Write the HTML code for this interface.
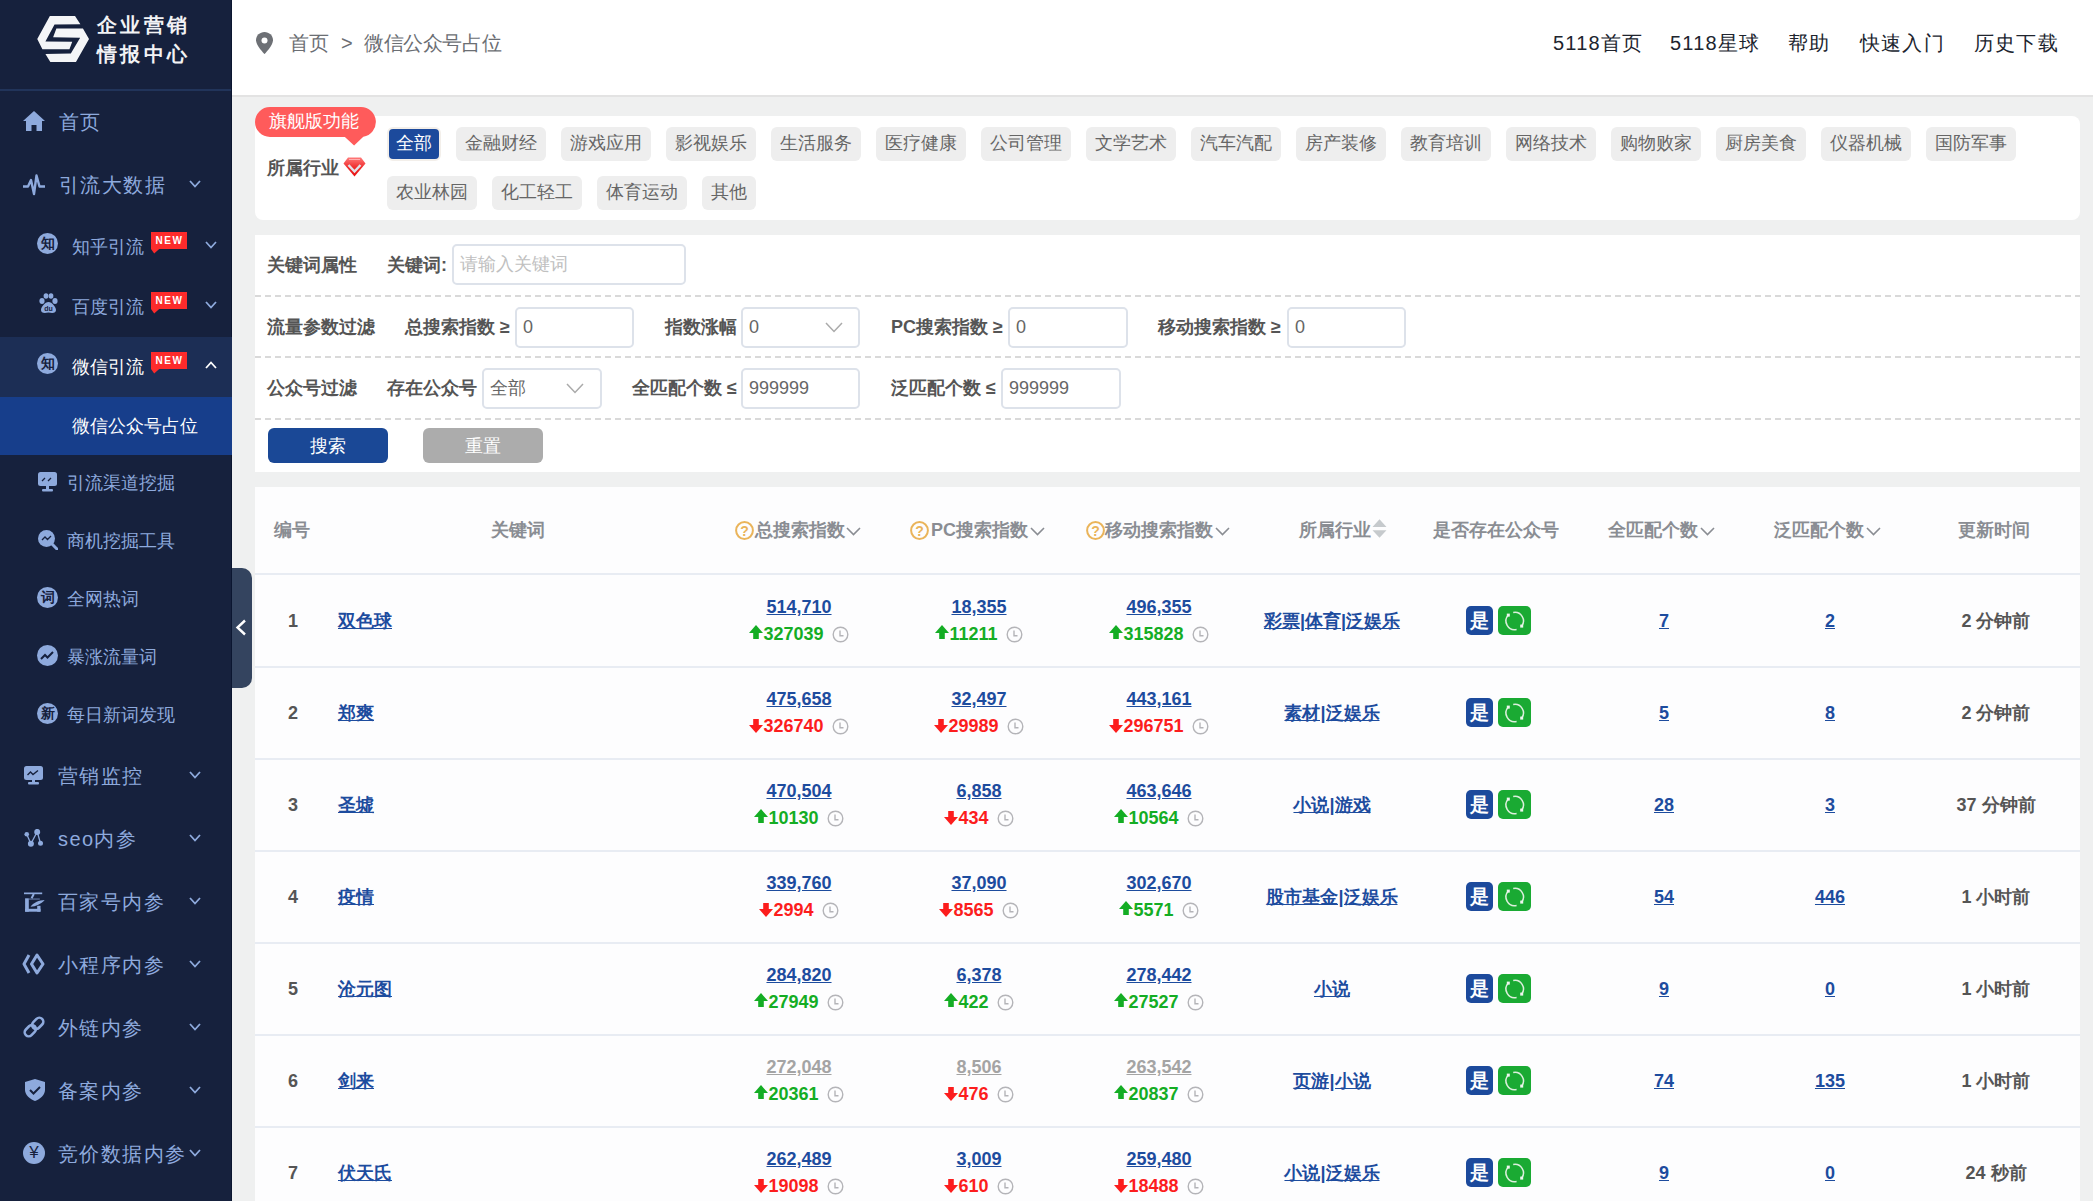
<!DOCTYPE html><html><head><meta charset="utf-8"><style>
*{box-sizing:border-box;margin:0;padding:0}
html,body{width:2093px;height:1201px;overflow:hidden}
body{position:relative;background:#eff0f0;font-family:"Liberation Sans",sans-serif;color:#333}
.a{position:absolute;white-space:nowrap}
#side{position:absolute;left:0;top:0;width:232px;height:1201px;background:#16213d;overflow:hidden}
#side .edge{position:absolute;left:231px;top:0;width:1px;height:1201px;background:#0b1630}
#side .sep{position:absolute;left:0;top:89px;width:231px;height:2px;background:#21345a}
.t20{position:absolute;font-size:20px;line-height:20px;color:#8eaadd;white-space:nowrap;letter-spacing:1.4px}
.t18{position:absolute;font-size:18px;line-height:18px;color:#8eaadd;white-space:nowrap}
.new{position:absolute;width:36px;height:21px}
#hdr{position:absolute;left:232px;top:0;width:1861px;height:97px;background:#fff;border-bottom:2px solid #e3e3e3}
.card{position:absolute;left:255px;width:1825px;background:#fff}
.tag{position:absolute;height:34px;line-height:32px;font-size:18px;color:#666;background:#eeeeee;border-radius:6px;text-align:center;white-space:nowrap}
.lbl{position:absolute;font-size:18px;line-height:18px;font-weight:bold;color:#555;white-space:nowrap}
.inp{position:absolute;height:41px;border:2px solid #dde2ea;border-radius:5px;background:#fff;font-size:18px;color:#666;line-height:37px;padding-left:6px;white-space:nowrap}
.dash{position:absolute;left:255px;width:1825px;height:2px;background:repeating-linear-gradient(90deg,#d9d9d9 0 6px,transparent 6px 10px)}
.th{position:absolute;font-size:18px;line-height:18px;font-weight:bold;color:#8a8d93;white-space:nowrap}
.rl{position:absolute;left:255px;width:1825px;height:2px;background:#e8ecf3}
.num{position:absolute;font-size:18px;line-height:18px;font-weight:bold;color:#555;white-space:nowrap}
.lnk{position:absolute;font-size:18px;line-height:18px;font-weight:bold;color:#1d4c9e;text-decoration:underline;white-space:nowrap;text-underline-offset:1px}
.val{position:absolute;font-size:18px;line-height:18px;font-weight:bold;color:#1d4c9e;text-decoration:underline;white-space:nowrap;text-align:center;width:160px;text-underline-offset:1px}
.val.g{color:#a4a4a4}
.chg{position:absolute;font-size:18px;line-height:18px;font-weight:bold;white-space:nowrap;width:160px;text-align:center}
.up{color:#14ad24}.dn{color:#fc1d1d}
.chg svg{vertical-align:-2px}
.badge{position:absolute;width:27px;height:29px;background:#1c4a9c;border-radius:5px;color:#fff;font-size:19px;font-weight:bold;line-height:29px;text-align:center}
.rf{position:absolute;width:33px;height:29px;background:#1aaa33;border-radius:5px}
</style></head><body>
<div id="side"><div class="edge"></div>
<svg class="a" style="left:34px;top:12px" width="60" height="56" viewBox="0 0 1287 1201">
<path fill="#f4f5f7" d="M340,85 L880,85 L995,260 L440,270 L245,630 L820,640 L760,800 L180,800 L70,580 Z"/>
<path fill="#f4f5f7" d="M480,355 L1050,355 L1180,580 L900,1075 L350,1075 L245,900 L790,890 L990,550 L410,540 Z"/>
</svg>
<div class="a" style="left:97px;top:15px;color:#f2f3f5;font-size:20px;line-height:20px;font-weight:bold;letter-spacing:3.3px">企业营销</div>
<div class="a" style="left:97px;top:44px;color:#f2f3f5;font-size:20px;line-height:20px;font-weight:bold;letter-spacing:3.3px">情报中心</div>
<div class="sep"></div>
<div class="a" style="left:0;top:337px;width:232px;height:60px;background:#1c2e55"></div>
<div class="a" style="left:0;top:397px;width:232px;height:58px;background:#173e8b"></div>
<svg class="a" style="left:23px;top:110px" width="22" height="22" viewBox="0 0 22 22"><path d="M11,1 L22,11 L19,11 L19,21 L13.5,21 L13.5,15 L8.5,15 L8.5,21 L3,21 L3,11 L0,11 Z" fill="#8eaadd"/></svg>
<div class="t20" style="left:59px;top:112px">首页</div>
<svg class="a" style="left:23px;top:174px" width="22" height="22" viewBox="0 0 22 22"><path d="M0.5,12.5 L5,12.5 L8,6 L11,20 L13.5,1.5 L16.5,12.5 L21.5,12.5" fill="none" stroke="#8eaadd" stroke-width="2.4" stroke-linejoin="round" stroke-linecap="round"/></svg>
<div class="t20" style="left:59px;top:175px">引流大数据</div>
<svg class="a" style="left:189px;top:180px" width="12" height="8" viewBox="0 0 12 8"><path d="M1,1 L6.0,6.5 L11,1" fill="none" stroke="#8eaadd" stroke-width="1.8"/></svg>
<div class="a" style="left:37px;top:233px;width:21px;height:21px;border-radius:50%;background:#8eaadd;color:#16213d;font-size:14px;line-height:21px;text-align:center;font-weight:bold">知</div>
<div class="t18" style="left:72px;top:238px">知乎引流</div>
<svg class="a" style="left:151px;top:232px" width="37" height="22" viewBox="0 0 37 22"><path d="M0,0 H36 V17 H8.2 L3.2,21.5 L0,17 Z" fill="#fd2b2b"/><text x="19.5" y="12.3" text-anchor="middle" font-family="Liberation Sans" font-weight="bold" font-size="10.5" letter-spacing="1.6" fill="#fff" transform="scale(0.95,1)">NEW</text></svg>
<svg class="a" style="left:205px;top:241px" width="12" height="8" viewBox="0 0 12 8"><path d="M1,1 L6.0,6.5 L11,1" fill="none" stroke="#8eaadd" stroke-width="1.7"/></svg>
<svg class="a" style="left:38px;top:293px" width="21" height="21" viewBox="0 0 21 21"><ellipse cx="4" cy="8" rx="2.6" ry="3" fill="#8eaadd"/><ellipse cx="8" cy="3" rx="2.4" ry="2.8" fill="#8eaadd"/><ellipse cx="13" cy="3" rx="2.4" ry="2.8" fill="#8eaadd"/><ellipse cx="17" cy="8" rx="2.6" ry="3" fill="#8eaadd"/><path d="M10.5,9 C7,9 3,14 3,17 C3,20 6,20.5 10.5,19.5 C15,20.5 18,20 18,17 C18,14 14,9 10.5,9 Z" fill="#8eaadd"/><text x="10.5" y="18" text-anchor="middle" font-size="7" font-weight="bold" font-family="Liberation Sans" fill="#16213d">du</text></svg>
<div class="t18" style="left:72px;top:298px">百度引流</div>
<svg class="a" style="left:151px;top:292px" width="37" height="22" viewBox="0 0 37 22"><path d="M0,0 H36 V17 H8.2 L3.2,21.5 L0,17 Z" fill="#fd2b2b"/><text x="19.5" y="12.3" text-anchor="middle" font-family="Liberation Sans" font-weight="bold" font-size="10.5" letter-spacing="1.6" fill="#fff" transform="scale(0.95,1)">NEW</text></svg>
<svg class="a" style="left:205px;top:301px" width="12" height="8" viewBox="0 0 12 8"><path d="M1,1 L6.0,6.5 L11,1" fill="none" stroke="#8eaadd" stroke-width="1.8"/></svg>
<div class="a" style="left:37px;top:353px;width:21px;height:21px;border-radius:50%;background:#8eaadd;color:#16213d;font-size:14px;line-height:21px;text-align:center;font-weight:bold">知</div>
<div class="t18" style="left:72px;top:358px;color:#fff">微信引流</div>
<svg class="a" style="left:151px;top:352px" width="37" height="22" viewBox="0 0 37 22"><path d="M0,0 H36 V17 H8.2 L3.2,21.5 L0,17 Z" fill="#fd2b2b"/><text x="19.5" y="12.3" text-anchor="middle" font-family="Liberation Sans" font-weight="bold" font-size="10.5" letter-spacing="1.6" fill="#fff" transform="scale(0.95,1)">NEW</text></svg>
<svg class="a" style="left:205px;top:361px" width="12" height="8" viewBox="0 0 12 8"><path d="M1,7 L6.0,1.5 L11,7" fill="none" stroke="#fff" stroke-width="1.8"/></svg>
<div class="t18" style="left:72px;top:417px;color:#fff">微信公众号占位</div>
<svg class="a" style="left:38px;top:472px" width="19" height="20" viewBox="0 0 19 20"><rect x="0" y="0" width="19" height="14" rx="2.5" fill="#8eaadd"/><rect x="8" y="13" width="3" height="4" fill="#8eaadd"/><rect x="4" y="17" width="11" height="2.5" rx="1" fill="#8eaadd"/><path d="M4,9 L7,6 M10,9 L13,6" stroke="#16213d" stroke-width="1.3"/></svg>
<div class="t18" style="left:67px;top:474px">引流渠道挖掘</div>
<svg class="a" style="left:38px;top:530px" width="20" height="20" viewBox="0 0 20 20"><circle cx="8.5" cy="8.5" r="8.5" fill="#8eaadd"/><path d="M14,14 L19,19" stroke="#8eaadd" stroke-width="3" stroke-linecap="round"/><path d="M4,10 L7,7 L9.5,9.5 L13,6" fill="none" stroke="#16213d" stroke-width="1.3"/></svg>
<div class="t18" style="left:67px;top:532px">商机挖掘工具</div>
<div class="a" style="left:37px;top:587px;width:21px;height:21px;border-radius:50%;background:#8eaadd;color:#16213d;font-size:14px;line-height:21px;text-align:center;font-weight:bold">词</div>
<div class="t18" style="left:67px;top:590px">全网热词</div>
<svg class="a" style="left:37px;top:645px" width="21" height="21" viewBox="0 0 21 21"><circle cx="10.5" cy="10.5" r="10.5" fill="#8eaadd"/><path d="M4,14 L8,10 L10.5,12.5 L16,7" fill="none" stroke="#16213d" stroke-width="2"/></svg>
<div class="t18" style="left:67px;top:648px">暴涨流量词</div>
<div class="a" style="left:37px;top:703px;width:21px;height:21px;border-radius:50%;background:#8eaadd;color:#16213d;font-size:14px;line-height:21px;text-align:center;font-weight:bold">新</div>
<div class="t18" style="left:67px;top:706px">每日新词发现</div>
<svg class="a" style="left:24px;top:766px" width="19" height="19" viewBox="0 0 19 19"><rect x="0" y="0" width="19" height="14" rx="2.5" fill="#8eaadd"/><rect x="8" y="13" width="3" height="3" fill="#8eaadd"/><rect x="4" y="16" width="11" height="2.5" rx="1" fill="#8eaadd"/><path d="M3.5,9 L6.5,6 L9,8.5 L14,4.5" fill="none" stroke="#16213d" stroke-width="1.4"/></svg>
<div class="t20" style="left:58px;top:766px">营销监控</div>
<svg class="a" style="left:189px;top:771px" width="12" height="8" viewBox="0 0 12 8"><path d="M1,1 L6.0,6.5 L11,1" fill="none" stroke="#8eaadd" stroke-width="1.8"/></svg>
<svg class="a" style="left:24px;top:829px" width="20" height="19" viewBox="0 0 20 19"><path d="M2.75,5.2 L6.9,14.75 L13.2,2.7 L16.5,14.3" fill="none" stroke="#8eaadd" stroke-width="1.3"/><circle cx="2.75" cy="5.2" r="2.3" fill="#8eaadd"/><circle cx="13.2" cy="2.9" r="3" fill="#8eaadd"/><circle cx="6.9" cy="14.75" r="3" fill="#8eaadd"/><circle cx="16.5" cy="14.3" r="2.5" fill="#8eaadd"/></svg>
<div class="t20" style="left:58px;top:829px">seo内参</div>
<svg class="a" style="left:189px;top:834px" width="12" height="8" viewBox="0 0 12 8"><path d="M1,1 L6.0,6.5 L11,1" fill="none" stroke="#8eaadd" stroke-width="1.8"/></svg>
<svg class="a" style="left:24px;top:892px" width="21" height="20" viewBox="0 0 21 20"><rect x="0" y="0.5" width="18.2" height="1.7" fill="#8eaadd"/><path d="M9.8,2 L7.6,6.3" stroke="#8eaadd" stroke-width="2"/><rect x="1.1" y="6.3" width="3.7" height="13.4" fill="#8eaadd"/><rect x="1.1" y="16.8" width="15.4" height="2.9" fill="#8eaadd"/><rect x="13.2" y="13.8" width="3.3" height="5.9" fill="#8eaadd"/><path d="M6.5,14.7 C10,10 15,8.5 20.7,8 C17,12 12,14.5 6.5,14.7 Z" fill="#8eaadd"/><rect x="4.8" y="6.3" width="11" height="1.5" fill="#8eaadd" opacity="0.5"/></svg>
<div class="t20" style="left:58px;top:892px">百家号内参</div>
<svg class="a" style="left:189px;top:897px" width="12" height="8" viewBox="0 0 12 8"><path d="M1,1 L6.0,6.5 L11,1" fill="none" stroke="#8eaadd" stroke-width="1.8"/></svg>
<svg class="a" style="left:22px;top:953px" width="24" height="22" viewBox="0 0 24 22"><path d="M7,2 L2,11 L7,20" fill="none" stroke="#8eaadd" stroke-width="3" stroke-linejoin="round"/><path d="M15,2 L21,11 L15,20 L9.5,11 Z" fill="none" stroke="#8eaadd" stroke-width="3" stroke-linejoin="round"/></svg>
<div class="t20" style="left:58px;top:955px">小程序内参</div>
<svg class="a" style="left:189px;top:960px" width="12" height="8" viewBox="0 0 12 8"><path d="M1,1 L6.0,6.5 L11,1" fill="none" stroke="#8eaadd" stroke-width="1.8"/></svg>
<svg class="a" style="left:23px;top:1016px" width="22" height="22" viewBox="0 0 22 22"><g transform="rotate(-45 11 11)" fill="none" stroke="#8eaadd" stroke-width="2.6"><rect x="-0.5" y="7" width="12.5" height="8" rx="4"/><rect x="10" y="7" width="12.5" height="8" rx="4"/></g></svg>
<div class="t20" style="left:58px;top:1018px">外链内参</div>
<svg class="a" style="left:189px;top:1023px" width="12" height="8" viewBox="0 0 12 8"><path d="M1,1 L6.0,6.5 L11,1" fill="none" stroke="#8eaadd" stroke-width="1.8"/></svg>
<svg class="a" style="left:25px;top:1079px" width="20" height="22" viewBox="0 0 20 22"><path d="M10,0 L20,3 V11 C20,16 15,20 10,22 C5,20 0,16 0,11 V3 Z" fill="#8eaadd"/><path d="M5,11 L8.5,14.5 L15,8" fill="none" stroke="#16213d" stroke-width="2"/></svg>
<div class="t20" style="left:58px;top:1081px">备案内参</div>
<svg class="a" style="left:189px;top:1086px" width="12" height="8" viewBox="0 0 12 8"><path d="M1,1 L6.0,6.5 L11,1" fill="none" stroke="#8eaadd" stroke-width="1.8"/></svg>
<div class="a" style="left:23px;top:1142px;width:22px;height:22px;border-radius:50%;background:#8eaadd;color:#16213d;font-size:17px;line-height:22px;text-align:center;font-weight:normal">¥</div>
<div class="t20" style="left:58px;top:1144px">竞价数据内参</div>
<svg class="a" style="left:189px;top:1149px" width="12" height="8" viewBox="0 0 12 8"><path d="M1,1 L6.0,6.5 L11,1" fill="none" stroke="#8eaadd" stroke-width="1.8"/></svg>
</div>
<div class="a" style="left:232px;top:568px;width:20px;height:120px;background:#34445f;border-radius:0 10px 10px 0"></div>
<svg class="a" style="left:235px;top:619px" width="12" height="17" viewBox="0 0 12 17"><path d="M10,1.5 L2.5,8.5 L10,15.5" fill="none" stroke="#fff" stroke-width="2.4"/></svg>
<div id="hdr"></div>
<svg class="a" style="left:256px;top:32px" width="17" height="22" viewBox="0 0 17 22"><path d="M8.5,0 C3.8,0 0,3.6 0,8.2 C0,13.5 8.5,22 8.5,22 C8.5,22 17,13.5 17,8.2 C17,3.6 13.2,0 8.5,0 Z" fill="#6d7075"/><circle cx="8.5" cy="8.5" r="3" fill="#fff"/></svg>
<div class="a" style="left:289px;top:33px;font-size:20px;line-height:20px;color:#6b6e73">首页</div>
<div class="a" style="left:341px;top:33px;font-size:20px;line-height:20px;color:#6b6e73">&gt;</div>
<div class="a" style="left:364px;top:33px;font-size:20px;line-height:20px;color:#6b6e73;letter-spacing:-0.4px">微信公众号占位</div>
<div class="a" style="left:1553px;top:33px;font-size:20px;line-height:20px;color:#20242e;letter-spacing:1.2px">5118首页</div>
<div class="a" style="left:1670px;top:33px;font-size:20px;line-height:20px;color:#20242e;letter-spacing:1.2px">5118星球</div>
<div class="a" style="left:1788px;top:33px;font-size:20px;line-height:20px;color:#20242e;letter-spacing:1.2px">帮助</div>
<div class="a" style="left:1860px;top:33px;font-size:20px;line-height:20px;color:#20242e;letter-spacing:1.2px">快速入门</div>
<div class="a" style="left:1974px;top:33px;font-size:20px;line-height:20px;color:#20242e;letter-spacing:1.2px">历史下载</div>
<div class="card" style="top:116px;height:104px;border-radius:8px"></div>
<svg class="a" style="left:255px;top:106px" width="121" height="41" viewBox="0 0 121 41"><path d="M15,1 H106 A15,15 0 0 1 108.3,30.8 L99.1,39.6 L89.9,31 H15 A15,15 0 0 1 15,1 Z" fill="#ff5b5b"/></svg>
<div class="a" style="left:269px;top:112px;font-size:18px;line-height:18px;color:#fff">旗舰版功能</div>
<div class="lbl" style="left:267px;top:159px">所属行业</div>
<svg class="a" style="left:343px;top:157px" width="23" height="20" viewBox="0 0 23 20"><defs><linearGradient id="dg" x1="0" y1="0" x2="0" y2="1"><stop offset="0" stop-color="#ff7a7a"/><stop offset="0.5" stop-color="#f03030"/><stop offset="1" stop-color="#e81010"/></linearGradient></defs><path d="M5,0.5 H18 L22.5,6.5 L11.5,19.5 L0.5,6.5 Z" fill="url(#dg)"/><path d="M5.5,8 L11.5,14.5 L17.5,8" fill="none" stroke="#dfe4ea" stroke-width="2.4"/><path d="M6,2.5 H17" stroke="#ffb0b0" stroke-width="1"/></svg>
<div class="tag" style="left:387px;top:127px;width:54px;background:#1c4a9c;color:#fff;border:2px solid #f3efea;line-height:28px;border-radius:6px">全部</div>
<div class="tag" style="left:456px;top:127px;width:90px">金融财经</div>
<div class="tag" style="left:561px;top:127px;width:90px">游戏应用</div>
<div class="tag" style="left:666px;top:127px;width:90px">影视娱乐</div>
<div class="tag" style="left:771px;top:127px;width:90px">生活服务</div>
<div class="tag" style="left:876px;top:127px;width:90px">医疗健康</div>
<div class="tag" style="left:981px;top:127px;width:90px">公司管理</div>
<div class="tag" style="left:1086px;top:127px;width:90px">文学艺术</div>
<div class="tag" style="left:1191px;top:127px;width:90px">汽车汽配</div>
<div class="tag" style="left:1296px;top:127px;width:90px">房产装修</div>
<div class="tag" style="left:1401px;top:127px;width:90px">教育培训</div>
<div class="tag" style="left:1506px;top:127px;width:90px">网络技术</div>
<div class="tag" style="left:1611px;top:127px;width:90px">购物败家</div>
<div class="tag" style="left:1716px;top:127px;width:90px">厨房美食</div>
<div class="tag" style="left:1821px;top:127px;width:90px">仪器机械</div>
<div class="tag" style="left:1926px;top:127px;width:90px">国防军事</div>
<div class="tag" style="left:387px;top:176px;width:90px">农业林园</div>
<div class="tag" style="left:492px;top:176px;width:90px">化工轻工</div>
<div class="tag" style="left:597px;top:176px;width:90px">体育运动</div>
<div class="tag" style="left:702px;top:176px;width:54px">其他</div>
<div class="card" style="top:235px;height:237px"></div>
<div class="lbl" style="left:267px;top:256px">关键词属性</div>
<div class="lbl" style="left:387px;top:256px">关键词:</div>
<div class="inp" style="left:452px;top:244px;width:234px;color:#c0c0c0">请输入关键词</div>
<div class="dash" style="top:295px"></div>
<div class="lbl" style="left:267px;top:318px">流量参数过滤</div>
<div class="lbl" style="left:405px;top:318px">总搜索指数 ≥</div>
<div class="inp" style="left:515px;top:307px;width:119px">0</div>
<div class="lbl" style="left:665px;top:318px">指数涨幅</div>
<div class="inp" style="left:741px;top:307px;width:119px">0</div>
<svg class="a" style="left:825px;top:322px" width="18" height="11" viewBox="0 0 18 11"><path d="M1,1 L9.0,9.5 L17,1" fill="none" stroke="#aaa" stroke-width="1.5"/></svg>
<div class="lbl" style="left:891px;top:318px">PC搜索指数 ≥</div>
<div class="inp" style="left:1008px;top:307px;width:120px">0</div>
<div class="lbl" style="left:1158px;top:318px">移动搜索指数 ≥</div>
<div class="inp" style="left:1287px;top:307px;width:119px">0</div>
<div class="dash" style="top:356px"></div>
<div class="lbl" style="left:267px;top:379px">公众号过滤</div>
<div class="lbl" style="left:387px;top:379px">存在公众号</div>
<div class="inp" style="left:482px;top:368px;width:120px">全部</div>
<svg class="a" style="left:566px;top:383px" width="18" height="11" viewBox="0 0 18 11"><path d="M1,1 L9.0,9.5 L17,1" fill="none" stroke="#aaa" stroke-width="1.5"/></svg>
<div class="lbl" style="left:632px;top:379px">全匹配个数 ≤</div>
<div class="inp" style="left:741px;top:368px;width:119px">999999</div>
<div class="lbl" style="left:891px;top:379px">泛匹配个数 ≤</div>
<div class="inp" style="left:1001px;top:368px;width:120px">999999</div>
<div class="dash" style="top:418px"></div>
<div class="a" style="left:268px;top:428px;width:120px;height:35px;background:#1a4896;border-radius:6px;color:#fff;font-size:18px;line-height:36px;text-align:center">搜索</div>
<div class="a" style="left:423px;top:428px;width:120px;height:35px;background:#acacac;border-radius:6px;color:#fff;font-size:18px;line-height:36px;text-align:center">重置</div>
<div class="card" style="top:487px;height:720px;background:#fdfdfe"></div>
<div class="th" style="left:274px;top:521px">编号</div>
<div class="th" style="left:491px;top:521px">关键词</div>
<svg class="a" style="left:735px;top:521px" width="19" height="19" viewBox="0 0 19 19"><circle cx="9.5" cy="9.5" r="8.4" fill="none" stroke="#eab45a" stroke-width="2"/><text x="9.5" y="14.8" text-anchor="middle" font-family="Liberation Sans" font-size="14" font-weight="bold" fill="#eab45a">?</text></svg>
<div class="th" style="left:755px;top:521px">总搜索指数</div>
<svg class="a" style="left:846px;top:527px" width="15" height="9" viewBox="0 0 15 9"><path d="M1,1 L7.5,7.5 L14,1" fill="none" stroke="#8a8d93" stroke-width="1.6"/></svg>
<svg class="a" style="left:910px;top:521px" width="19" height="19" viewBox="0 0 19 19"><circle cx="9.5" cy="9.5" r="8.4" fill="none" stroke="#eab45a" stroke-width="2"/><text x="9.5" y="14.8" text-anchor="middle" font-family="Liberation Sans" font-size="14" font-weight="bold" fill="#eab45a">?</text></svg>
<div class="th" style="left:931px;top:521px">PC搜索指数</div>
<svg class="a" style="left:1030px;top:527px" width="15" height="9" viewBox="0 0 15 9"><path d="M1,1 L7.5,7.5 L14,1" fill="none" stroke="#8a8d93" stroke-width="1.6"/></svg>
<svg class="a" style="left:1086px;top:521px" width="19" height="19" viewBox="0 0 19 19"><circle cx="9.5" cy="9.5" r="8.4" fill="none" stroke="#eab45a" stroke-width="2"/><text x="9.5" y="14.8" text-anchor="middle" font-family="Liberation Sans" font-size="14" font-weight="bold" fill="#eab45a">?</text></svg>
<div class="th" style="left:1105px;top:521px">移动搜索指数</div>
<svg class="a" style="left:1215px;top:527px" width="15" height="9" viewBox="0 0 15 9"><path d="M1,1 L7.5,7.5 L14,1" fill="none" stroke="#8a8d93" stroke-width="1.6"/></svg>
<div class="th" style="left:1299px;top:521px">所属行业</div>
<svg class="a" style="left:1372px;top:519px" width="15" height="19" viewBox="0 0 15 19"><path d="M0.5,8 L7.5,0.3 L14.5,8 Z M0.5,11.2 L7.5,18.8 L14.5,11.2 Z" fill="#c6cacd"/></svg>
<div class="th" style="left:1433px;top:521px">是否存在公众号</div>
<div class="th" style="left:1608px;top:521px">全匹配个数</div>
<svg class="a" style="left:1700px;top:527px" width="15" height="9" viewBox="0 0 15 9"><path d="M1,1 L7.5,7.5 L14,1" fill="none" stroke="#8a8d93" stroke-width="1.6"/></svg>
<div class="th" style="left:1774px;top:521px">泛匹配个数</div>
<svg class="a" style="left:1866px;top:527px" width="15" height="9" viewBox="0 0 15 9"><path d="M1,1 L7.5,7.5 L14,1" fill="none" stroke="#8a8d93" stroke-width="1.6"/></svg>
<div class="th" style="left:1958px;top:521px">更新时间</div>
<div class="rl" style="top:573px"></div>
<div class="num" style="left:288px;top:612px">1</div>
<div class="lnk" style="left:338px;top:612px">双色球</div>
<div class="val" style="left:719px;top:598px">514,710</div>
<div class="chg up" style="left:719px;top:625px"><svg width="14" height="14" viewBox="0 0 14 14" style="vertical-align:1px"><path d="M7,0 L14,8 L9.8,8 L9.8,14 L4.2,14 L4.2,8 L0,8 Z" fill="#14ad24"/></svg>327039<svg width="17" height="17" viewBox="0 0 17 17" style="vertical-align:-3px;margin-left:8px"><circle cx="8.5" cy="8.5" r="7.3" fill="none" stroke="#b4b4b8" stroke-width="1.4"/><path d="M8,4.5 V9.8 H11.5" fill="none" stroke="#b4b4b8" stroke-width="1.4"/></svg></div>
<div class="val" style="left:899px;top:598px">18,355</div>
<div class="chg up" style="left:899px;top:625px"><svg width="14" height="14" viewBox="0 0 14 14" style="vertical-align:1px"><path d="M7,0 L14,8 L9.8,8 L9.8,14 L4.2,14 L4.2,8 L0,8 Z" fill="#14ad24"/></svg>11211<svg width="17" height="17" viewBox="0 0 17 17" style="vertical-align:-3px;margin-left:8px"><circle cx="8.5" cy="8.5" r="7.3" fill="none" stroke="#b4b4b8" stroke-width="1.4"/><path d="M8,4.5 V9.8 H11.5" fill="none" stroke="#b4b4b8" stroke-width="1.4"/></svg></div>
<div class="val" style="left:1079px;top:598px">496,355</div>
<div class="chg up" style="left:1079px;top:625px"><svg width="14" height="14" viewBox="0 0 14 14" style="vertical-align:1px"><path d="M7,0 L14,8 L9.8,8 L9.8,14 L4.2,14 L4.2,8 L0,8 Z" fill="#14ad24"/></svg>315828<svg width="17" height="17" viewBox="0 0 17 17" style="vertical-align:-3px;margin-left:8px"><circle cx="8.5" cy="8.5" r="7.3" fill="none" stroke="#b4b4b8" stroke-width="1.4"/><path d="M8,4.5 V9.8 H11.5" fill="none" stroke="#b4b4b8" stroke-width="1.4"/></svg></div>
<div class="lnk" style="left:1252px;width:160px;text-align:center;top:612px">彩票|体育|泛娱乐</div>
<div class="badge" style="left:1466px;top:606px">是</div>
<div class="rf" style="left:1498px;top:606px"><svg width="33" height="29" viewBox="0 0 33 29"><path d="M10.4,9.1 A8.6,8.6 0 0 0 18.6,23.4" fill="none" stroke="#dcefdc" stroke-width="1.5"/><path d="M15.2,6.5 A8.6,8.6 0 0 1 23.7,20.1" fill="none" stroke="#dcefdc" stroke-width="1.5"/><rect x="8.8" y="7.6" width="3" height="3" fill="#eef6ee"/><rect x="22.2" y="18.6" width="3" height="3" fill="#eef6ee"/></svg></div>
<div class="lnk" style="left:1584px;width:160px;text-align:center;top:612px">7</div>
<div class="lnk" style="left:1750px;width:160px;text-align:center;top:612px">2</div>
<div class="num" style="left:1916px;width:160px;text-align:center;top:612px">2 分钟前</div>
<div class="rl" style="top:666px"></div>
<div class="num" style="left:288px;top:704px">2</div>
<div class="lnk" style="left:338px;top:704px">郑爽</div>
<div class="val" style="left:719px;top:690px">475,658</div>
<div class="chg dn" style="left:719px;top:717px"><svg width="14" height="14" viewBox="0 0 14 14" style="vertical-align:-1px"><path d="M4.2,0 L9.8,0 L9.8,6 L14,6 L7,14 L0,6 L4.2,6 Z" fill="#fc1d1d"/></svg>326740<svg width="17" height="17" viewBox="0 0 17 17" style="vertical-align:-3px;margin-left:8px"><circle cx="8.5" cy="8.5" r="7.3" fill="none" stroke="#b4b4b8" stroke-width="1.4"/><path d="M8,4.5 V9.8 H11.5" fill="none" stroke="#b4b4b8" stroke-width="1.4"/></svg></div>
<div class="val" style="left:899px;top:690px">32,497</div>
<div class="chg dn" style="left:899px;top:717px"><svg width="14" height="14" viewBox="0 0 14 14" style="vertical-align:-1px"><path d="M4.2,0 L9.8,0 L9.8,6 L14,6 L7,14 L0,6 L4.2,6 Z" fill="#fc1d1d"/></svg>29989<svg width="17" height="17" viewBox="0 0 17 17" style="vertical-align:-3px;margin-left:8px"><circle cx="8.5" cy="8.5" r="7.3" fill="none" stroke="#b4b4b8" stroke-width="1.4"/><path d="M8,4.5 V9.8 H11.5" fill="none" stroke="#b4b4b8" stroke-width="1.4"/></svg></div>
<div class="val" style="left:1079px;top:690px">443,161</div>
<div class="chg dn" style="left:1079px;top:717px"><svg width="14" height="14" viewBox="0 0 14 14" style="vertical-align:-1px"><path d="M4.2,0 L9.8,0 L9.8,6 L14,6 L7,14 L0,6 L4.2,6 Z" fill="#fc1d1d"/></svg>296751<svg width="17" height="17" viewBox="0 0 17 17" style="vertical-align:-3px;margin-left:8px"><circle cx="8.5" cy="8.5" r="7.3" fill="none" stroke="#b4b4b8" stroke-width="1.4"/><path d="M8,4.5 V9.8 H11.5" fill="none" stroke="#b4b4b8" stroke-width="1.4"/></svg></div>
<div class="lnk" style="left:1252px;width:160px;text-align:center;top:704px">素材|泛娱乐</div>
<div class="badge" style="left:1466px;top:698px">是</div>
<div class="rf" style="left:1498px;top:698px"><svg width="33" height="29" viewBox="0 0 33 29"><path d="M10.4,9.1 A8.6,8.6 0 0 0 18.6,23.4" fill="none" stroke="#dcefdc" stroke-width="1.5"/><path d="M15.2,6.5 A8.6,8.6 0 0 1 23.7,20.1" fill="none" stroke="#dcefdc" stroke-width="1.5"/><rect x="8.8" y="7.6" width="3" height="3" fill="#eef6ee"/><rect x="22.2" y="18.6" width="3" height="3" fill="#eef6ee"/></svg></div>
<div class="lnk" style="left:1584px;width:160px;text-align:center;top:704px">5</div>
<div class="lnk" style="left:1750px;width:160px;text-align:center;top:704px">8</div>
<div class="num" style="left:1916px;width:160px;text-align:center;top:704px">2 分钟前</div>
<div class="rl" style="top:758px"></div>
<div class="num" style="left:288px;top:796px">3</div>
<div class="lnk" style="left:338px;top:796px">圣墟</div>
<div class="val" style="left:719px;top:782px">470,504</div>
<div class="chg up" style="left:719px;top:809px"><svg width="14" height="14" viewBox="0 0 14 14" style="vertical-align:1px"><path d="M7,0 L14,8 L9.8,8 L9.8,14 L4.2,14 L4.2,8 L0,8 Z" fill="#14ad24"/></svg>10130<svg width="17" height="17" viewBox="0 0 17 17" style="vertical-align:-3px;margin-left:8px"><circle cx="8.5" cy="8.5" r="7.3" fill="none" stroke="#b4b4b8" stroke-width="1.4"/><path d="M8,4.5 V9.8 H11.5" fill="none" stroke="#b4b4b8" stroke-width="1.4"/></svg></div>
<div class="val" style="left:899px;top:782px">6,858</div>
<div class="chg dn" style="left:899px;top:809px"><svg width="14" height="14" viewBox="0 0 14 14" style="vertical-align:-1px"><path d="M4.2,0 L9.8,0 L9.8,6 L14,6 L7,14 L0,6 L4.2,6 Z" fill="#fc1d1d"/></svg>434<svg width="17" height="17" viewBox="0 0 17 17" style="vertical-align:-3px;margin-left:8px"><circle cx="8.5" cy="8.5" r="7.3" fill="none" stroke="#b4b4b8" stroke-width="1.4"/><path d="M8,4.5 V9.8 H11.5" fill="none" stroke="#b4b4b8" stroke-width="1.4"/></svg></div>
<div class="val" style="left:1079px;top:782px">463,646</div>
<div class="chg up" style="left:1079px;top:809px"><svg width="14" height="14" viewBox="0 0 14 14" style="vertical-align:1px"><path d="M7,0 L14,8 L9.8,8 L9.8,14 L4.2,14 L4.2,8 L0,8 Z" fill="#14ad24"/></svg>10564<svg width="17" height="17" viewBox="0 0 17 17" style="vertical-align:-3px;margin-left:8px"><circle cx="8.5" cy="8.5" r="7.3" fill="none" stroke="#b4b4b8" stroke-width="1.4"/><path d="M8,4.5 V9.8 H11.5" fill="none" stroke="#b4b4b8" stroke-width="1.4"/></svg></div>
<div class="lnk" style="left:1252px;width:160px;text-align:center;top:796px">小说|游戏</div>
<div class="badge" style="left:1466px;top:790px">是</div>
<div class="rf" style="left:1498px;top:790px"><svg width="33" height="29" viewBox="0 0 33 29"><path d="M10.4,9.1 A8.6,8.6 0 0 0 18.6,23.4" fill="none" stroke="#dcefdc" stroke-width="1.5"/><path d="M15.2,6.5 A8.6,8.6 0 0 1 23.7,20.1" fill="none" stroke="#dcefdc" stroke-width="1.5"/><rect x="8.8" y="7.6" width="3" height="3" fill="#eef6ee"/><rect x="22.2" y="18.6" width="3" height="3" fill="#eef6ee"/></svg></div>
<div class="lnk" style="left:1584px;width:160px;text-align:center;top:796px">28</div>
<div class="lnk" style="left:1750px;width:160px;text-align:center;top:796px">3</div>
<div class="num" style="left:1916px;width:160px;text-align:center;top:796px">37 分钟前</div>
<div class="rl" style="top:850px"></div>
<div class="num" style="left:288px;top:888px">4</div>
<div class="lnk" style="left:338px;top:888px">疫情</div>
<div class="val" style="left:719px;top:874px">339,760</div>
<div class="chg dn" style="left:719px;top:901px"><svg width="14" height="14" viewBox="0 0 14 14" style="vertical-align:-1px"><path d="M4.2,0 L9.8,0 L9.8,6 L14,6 L7,14 L0,6 L4.2,6 Z" fill="#fc1d1d"/></svg>2994<svg width="17" height="17" viewBox="0 0 17 17" style="vertical-align:-3px;margin-left:8px"><circle cx="8.5" cy="8.5" r="7.3" fill="none" stroke="#b4b4b8" stroke-width="1.4"/><path d="M8,4.5 V9.8 H11.5" fill="none" stroke="#b4b4b8" stroke-width="1.4"/></svg></div>
<div class="val" style="left:899px;top:874px">37,090</div>
<div class="chg dn" style="left:899px;top:901px"><svg width="14" height="14" viewBox="0 0 14 14" style="vertical-align:-1px"><path d="M4.2,0 L9.8,0 L9.8,6 L14,6 L7,14 L0,6 L4.2,6 Z" fill="#fc1d1d"/></svg>8565<svg width="17" height="17" viewBox="0 0 17 17" style="vertical-align:-3px;margin-left:8px"><circle cx="8.5" cy="8.5" r="7.3" fill="none" stroke="#b4b4b8" stroke-width="1.4"/><path d="M8,4.5 V9.8 H11.5" fill="none" stroke="#b4b4b8" stroke-width="1.4"/></svg></div>
<div class="val" style="left:1079px;top:874px">302,670</div>
<div class="chg up" style="left:1079px;top:901px"><svg width="14" height="14" viewBox="0 0 14 14" style="vertical-align:1px"><path d="M7,0 L14,8 L9.8,8 L9.8,14 L4.2,14 L4.2,8 L0,8 Z" fill="#14ad24"/></svg>5571<svg width="17" height="17" viewBox="0 0 17 17" style="vertical-align:-3px;margin-left:8px"><circle cx="8.5" cy="8.5" r="7.3" fill="none" stroke="#b4b4b8" stroke-width="1.4"/><path d="M8,4.5 V9.8 H11.5" fill="none" stroke="#b4b4b8" stroke-width="1.4"/></svg></div>
<div class="lnk" style="left:1252px;width:160px;text-align:center;top:888px">股市基金|泛娱乐</div>
<div class="badge" style="left:1466px;top:882px">是</div>
<div class="rf" style="left:1498px;top:882px"><svg width="33" height="29" viewBox="0 0 33 29"><path d="M10.4,9.1 A8.6,8.6 0 0 0 18.6,23.4" fill="none" stroke="#dcefdc" stroke-width="1.5"/><path d="M15.2,6.5 A8.6,8.6 0 0 1 23.7,20.1" fill="none" stroke="#dcefdc" stroke-width="1.5"/><rect x="8.8" y="7.6" width="3" height="3" fill="#eef6ee"/><rect x="22.2" y="18.6" width="3" height="3" fill="#eef6ee"/></svg></div>
<div class="lnk" style="left:1584px;width:160px;text-align:center;top:888px">54</div>
<div class="lnk" style="left:1750px;width:160px;text-align:center;top:888px">446</div>
<div class="num" style="left:1916px;width:160px;text-align:center;top:888px">1 小时前</div>
<div class="rl" style="top:942px"></div>
<div class="num" style="left:288px;top:980px">5</div>
<div class="lnk" style="left:338px;top:980px">沧元图</div>
<div class="val" style="left:719px;top:966px">284,820</div>
<div class="chg up" style="left:719px;top:993px"><svg width="14" height="14" viewBox="0 0 14 14" style="vertical-align:1px"><path d="M7,0 L14,8 L9.8,8 L9.8,14 L4.2,14 L4.2,8 L0,8 Z" fill="#14ad24"/></svg>27949<svg width="17" height="17" viewBox="0 0 17 17" style="vertical-align:-3px;margin-left:8px"><circle cx="8.5" cy="8.5" r="7.3" fill="none" stroke="#b4b4b8" stroke-width="1.4"/><path d="M8,4.5 V9.8 H11.5" fill="none" stroke="#b4b4b8" stroke-width="1.4"/></svg></div>
<div class="val" style="left:899px;top:966px">6,378</div>
<div class="chg up" style="left:899px;top:993px"><svg width="14" height="14" viewBox="0 0 14 14" style="vertical-align:1px"><path d="M7,0 L14,8 L9.8,8 L9.8,14 L4.2,14 L4.2,8 L0,8 Z" fill="#14ad24"/></svg>422<svg width="17" height="17" viewBox="0 0 17 17" style="vertical-align:-3px;margin-left:8px"><circle cx="8.5" cy="8.5" r="7.3" fill="none" stroke="#b4b4b8" stroke-width="1.4"/><path d="M8,4.5 V9.8 H11.5" fill="none" stroke="#b4b4b8" stroke-width="1.4"/></svg></div>
<div class="val" style="left:1079px;top:966px">278,442</div>
<div class="chg up" style="left:1079px;top:993px"><svg width="14" height="14" viewBox="0 0 14 14" style="vertical-align:1px"><path d="M7,0 L14,8 L9.8,8 L9.8,14 L4.2,14 L4.2,8 L0,8 Z" fill="#14ad24"/></svg>27527<svg width="17" height="17" viewBox="0 0 17 17" style="vertical-align:-3px;margin-left:8px"><circle cx="8.5" cy="8.5" r="7.3" fill="none" stroke="#b4b4b8" stroke-width="1.4"/><path d="M8,4.5 V9.8 H11.5" fill="none" stroke="#b4b4b8" stroke-width="1.4"/></svg></div>
<div class="lnk" style="left:1252px;width:160px;text-align:center;top:980px">小说</div>
<div class="badge" style="left:1466px;top:974px">是</div>
<div class="rf" style="left:1498px;top:974px"><svg width="33" height="29" viewBox="0 0 33 29"><path d="M10.4,9.1 A8.6,8.6 0 0 0 18.6,23.4" fill="none" stroke="#dcefdc" stroke-width="1.5"/><path d="M15.2,6.5 A8.6,8.6 0 0 1 23.7,20.1" fill="none" stroke="#dcefdc" stroke-width="1.5"/><rect x="8.8" y="7.6" width="3" height="3" fill="#eef6ee"/><rect x="22.2" y="18.6" width="3" height="3" fill="#eef6ee"/></svg></div>
<div class="lnk" style="left:1584px;width:160px;text-align:center;top:980px">9</div>
<div class="lnk" style="left:1750px;width:160px;text-align:center;top:980px">0</div>
<div class="num" style="left:1916px;width:160px;text-align:center;top:980px">1 小时前</div>
<div class="rl" style="top:1034px"></div>
<div class="num" style="left:288px;top:1072px">6</div>
<div class="lnk" style="left:338px;top:1072px">剑来</div>
<div class="val g" style="left:719px;top:1058px">272,048</div>
<div class="chg up" style="left:719px;top:1085px"><svg width="14" height="14" viewBox="0 0 14 14" style="vertical-align:1px"><path d="M7,0 L14,8 L9.8,8 L9.8,14 L4.2,14 L4.2,8 L0,8 Z" fill="#14ad24"/></svg>20361<svg width="17" height="17" viewBox="0 0 17 17" style="vertical-align:-3px;margin-left:8px"><circle cx="8.5" cy="8.5" r="7.3" fill="none" stroke="#b4b4b8" stroke-width="1.4"/><path d="M8,4.5 V9.8 H11.5" fill="none" stroke="#b4b4b8" stroke-width="1.4"/></svg></div>
<div class="val g" style="left:899px;top:1058px">8,506</div>
<div class="chg dn" style="left:899px;top:1085px"><svg width="14" height="14" viewBox="0 0 14 14" style="vertical-align:-1px"><path d="M4.2,0 L9.8,0 L9.8,6 L14,6 L7,14 L0,6 L4.2,6 Z" fill="#fc1d1d"/></svg>476<svg width="17" height="17" viewBox="0 0 17 17" style="vertical-align:-3px;margin-left:8px"><circle cx="8.5" cy="8.5" r="7.3" fill="none" stroke="#b4b4b8" stroke-width="1.4"/><path d="M8,4.5 V9.8 H11.5" fill="none" stroke="#b4b4b8" stroke-width="1.4"/></svg></div>
<div class="val g" style="left:1079px;top:1058px">263,542</div>
<div class="chg up" style="left:1079px;top:1085px"><svg width="14" height="14" viewBox="0 0 14 14" style="vertical-align:1px"><path d="M7,0 L14,8 L9.8,8 L9.8,14 L4.2,14 L4.2,8 L0,8 Z" fill="#14ad24"/></svg>20837<svg width="17" height="17" viewBox="0 0 17 17" style="vertical-align:-3px;margin-left:8px"><circle cx="8.5" cy="8.5" r="7.3" fill="none" stroke="#b4b4b8" stroke-width="1.4"/><path d="M8,4.5 V9.8 H11.5" fill="none" stroke="#b4b4b8" stroke-width="1.4"/></svg></div>
<div class="lnk" style="left:1252px;width:160px;text-align:center;top:1072px">页游|小说</div>
<div class="badge" style="left:1466px;top:1066px">是</div>
<div class="rf" style="left:1498px;top:1066px"><svg width="33" height="29" viewBox="0 0 33 29"><path d="M10.4,9.1 A8.6,8.6 0 0 0 18.6,23.4" fill="none" stroke="#dcefdc" stroke-width="1.5"/><path d="M15.2,6.5 A8.6,8.6 0 0 1 23.7,20.1" fill="none" stroke="#dcefdc" stroke-width="1.5"/><rect x="8.8" y="7.6" width="3" height="3" fill="#eef6ee"/><rect x="22.2" y="18.6" width="3" height="3" fill="#eef6ee"/></svg></div>
<div class="lnk" style="left:1584px;width:160px;text-align:center;top:1072px">74</div>
<div class="lnk" style="left:1750px;width:160px;text-align:center;top:1072px">135</div>
<div class="num" style="left:1916px;width:160px;text-align:center;top:1072px">1 小时前</div>
<div class="rl" style="top:1126px"></div>
<div class="num" style="left:288px;top:1164px">7</div>
<div class="lnk" style="left:338px;top:1164px">伏天氏</div>
<div class="val" style="left:719px;top:1150px">262,489</div>
<div class="chg dn" style="left:719px;top:1177px"><svg width="14" height="14" viewBox="0 0 14 14" style="vertical-align:-1px"><path d="M4.2,0 L9.8,0 L9.8,6 L14,6 L7,14 L0,6 L4.2,6 Z" fill="#fc1d1d"/></svg>19098<svg width="17" height="17" viewBox="0 0 17 17" style="vertical-align:-3px;margin-left:8px"><circle cx="8.5" cy="8.5" r="7.3" fill="none" stroke="#b4b4b8" stroke-width="1.4"/><path d="M8,4.5 V9.8 H11.5" fill="none" stroke="#b4b4b8" stroke-width="1.4"/></svg></div>
<div class="val" style="left:899px;top:1150px">3,009</div>
<div class="chg dn" style="left:899px;top:1177px"><svg width="14" height="14" viewBox="0 0 14 14" style="vertical-align:-1px"><path d="M4.2,0 L9.8,0 L9.8,6 L14,6 L7,14 L0,6 L4.2,6 Z" fill="#fc1d1d"/></svg>610<svg width="17" height="17" viewBox="0 0 17 17" style="vertical-align:-3px;margin-left:8px"><circle cx="8.5" cy="8.5" r="7.3" fill="none" stroke="#b4b4b8" stroke-width="1.4"/><path d="M8,4.5 V9.8 H11.5" fill="none" stroke="#b4b4b8" stroke-width="1.4"/></svg></div>
<div class="val" style="left:1079px;top:1150px">259,480</div>
<div class="chg dn" style="left:1079px;top:1177px"><svg width="14" height="14" viewBox="0 0 14 14" style="vertical-align:-1px"><path d="M4.2,0 L9.8,0 L9.8,6 L14,6 L7,14 L0,6 L4.2,6 Z" fill="#fc1d1d"/></svg>18488<svg width="17" height="17" viewBox="0 0 17 17" style="vertical-align:-3px;margin-left:8px"><circle cx="8.5" cy="8.5" r="7.3" fill="none" stroke="#b4b4b8" stroke-width="1.4"/><path d="M8,4.5 V9.8 H11.5" fill="none" stroke="#b4b4b8" stroke-width="1.4"/></svg></div>
<div class="lnk" style="left:1252px;width:160px;text-align:center;top:1164px">小说|泛娱乐</div>
<div class="badge" style="left:1466px;top:1158px">是</div>
<div class="rf" style="left:1498px;top:1158px"><svg width="33" height="29" viewBox="0 0 33 29"><path d="M10.4,9.1 A8.6,8.6 0 0 0 18.6,23.4" fill="none" stroke="#dcefdc" stroke-width="1.5"/><path d="M15.2,6.5 A8.6,8.6 0 0 1 23.7,20.1" fill="none" stroke="#dcefdc" stroke-width="1.5"/><rect x="8.8" y="7.6" width="3" height="3" fill="#eef6ee"/><rect x="22.2" y="18.6" width="3" height="3" fill="#eef6ee"/></svg></div>
<div class="lnk" style="left:1584px;width:160px;text-align:center;top:1164px">9</div>
<div class="lnk" style="left:1750px;width:160px;text-align:center;top:1164px">0</div>
<div class="num" style="left:1916px;width:160px;text-align:center;top:1164px">24 秒前</div>
<div class="rl" style="top:1218px"></div>
</body></html>
